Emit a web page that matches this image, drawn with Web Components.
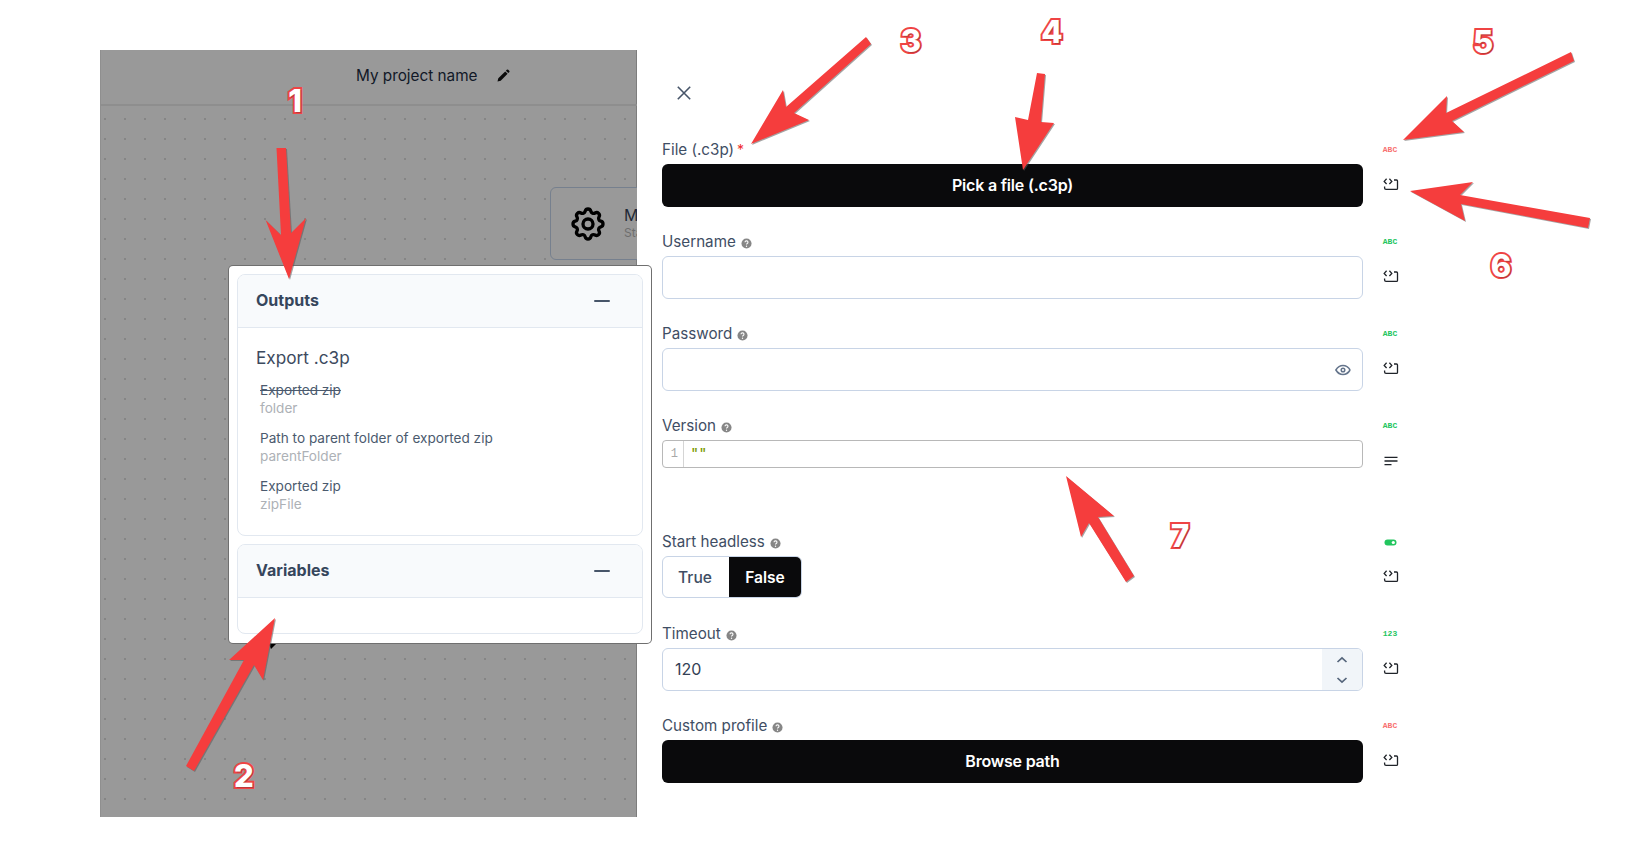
<!doctype html>
<html>
<head>
<meta charset="utf-8">
<title>Export .c3p</title>
<style>
    html, body { margin: 0; background: #fff; }
    body { font-family: Inter, "Liberation Sans", sans-serif; }
</style>
</head>
<body>

<editor-shot>
    <flow-canvas slot="canvas" project="My project name">
        <flow-panel>
            <panel-section heading="Outputs">
                <output-list></output-list>
            </panel-section>
            <panel-section heading="Variables" empty></panel-section>
        </flow-panel>
    </flow-canvas>

    <param-drawer slot="drawer">
        <param-field label="File (.c3p)" required kind="abc" tone="red">
            <dark-button>Pick a file (.c3p)</dark-button>
        </param-field>
        <param-field label="Username" help kind="abc">
            <text-box></text-box>
        </param-field>
        <param-field label="Password" help kind="abc">
            <text-box eye></text-box>
        </param-field>
        <param-field label="Version" help kind="abc" action="lines">
            <code-box></code-box>
        </param-field>
        <param-field label="Start headless" help kind="toggle">
            <bool-switch></bool-switch>
        </param-field>
        <param-field label="Timeout" help kind="123">
            <text-box stepper value="120"></text-box>
        </param-field>
        <param-field label="Custom profile" help kind="abc" tone="red">
            <dark-button>Browse path</dark-button>
        </param-field>
    </param-drawer>

    <shot-callouts slot="callouts"></shot-callouts>
</editor-shot>

<script>
// page frame: canvas on the left, form drawer on the right, callouts on top
customElements.define('editor-shot', class extends HTMLElement {
    constructor() {
        super();
        this.attachShadow({mode: 'open'}).innerHTML = `
        <style>
            :host { display: flex; position: relative; width: 1634px; height: 867px; overflow: hidden; background: #fff; }
            .left { padding: 50px 0 0 100px; }
            .right { padding-left: 25px; }
        </style>
        <div class="left"><slot name="canvas"></slot></div>
        <div class="right"><slot name="drawer"></slot></div>
        <slot name="callouts"></slot>`;
    }
});

customElements.define('flow-canvas', class extends HTMLElement {
    constructor() {
        super();
        this.attachShadow({mode: 'open'}).innerHTML = `
        <style>
            :host { display: block; position: relative; width: 537px; height: 767px; }
            .surface { height: 100%; display: flex; flex-direction: column; overflow: hidden; background: #999; box-shadow: inset -1px 0 0 #7d7d7d, inset 1px 0 0 #8f8f8f; }
            header { height: 56px; box-sizing: border-box; flex: none; display: flex; align-items: center; border-bottom: 2px solid #8e8e8e; padding: 0 0 3px 256px; gap: 18px; color: #111827; font-size: 15.3px; }
            header svg { width: 16px; height: 16px; }
            .grid { flex: 1; position: relative;
                background-image: radial-gradient(circle, #858585 1.2px, transparent 1.4px);
                background-size: 20px 20px; background-position: -5px 3px; }
            .node { position: absolute; left: 450px; top: 81px; width: 120px; height: 73px; box-sizing: border-box;
                border: 1px solid #76808e; border-radius: 6px; background: #999; display: flex; align-items: center; gap: 16px; padding-left: 17px; }
            .node svg { width: 40px; height: 40px; flex: none; }
            .node b { display: block; font-weight: 400; font-size: 16px; line-height: 18px; color: #1f2937; }
            .node small { display: block; font-size: 12px; line-height: 18px; color: #6e6e6e; }
            .stub { position: absolute; left: 168px; top: 536px; width: 10px; height: 7px; background: #000; clip-path: polygon(0 0, 100% 0, 30% 100%); }
            ::slotted(flow-panel) { position: absolute; left: 129px; top: 216px; }
        </style>
        <div class="surface">
            <header>
                <span></span>
                <svg viewBox="0 0 16 16"><path d="M2.5 13.5l.8-3.2 6.9-6.9 2.400 2.400-6.900 6.900zM10.900 2.700l.9-.9a1 1 0 0 1 1.400 0l1 1a1 1 0 0 1 0 1.400l-.9.9z" fill="#0b0b0b"/></svg>
            </header>
            <div class="grid">
                <div class="node">
                    <svg viewBox="0 0 24 24" fill="none" stroke="#000" stroke-width="2" stroke-linejoin="round"><path d="M10.325 4.317c.426 -1.756 2.924 -1.756 3.35 0a1.724 1.724 0 0 0 2.573 1.066c1.543 -.94 3.31 .826 2.37 2.37a1.724 1.724 0 0 0 1.065 2.572c1.756 .426 1.756 2.924 0 3.35a1.724 1.724 0 0 0 -1.066 2.573c.94 1.543 -.826 3.31 -2.37 2.37a1.724 1.724 0 0 0 -2.572 1.065c-.426 1.756 -2.924 1.756 -3.35 0a1.724 1.724 0 0 0 -2.573 -1.066c-1.543 .94 -3.31 -.826 -2.37 -2.37a1.724 1.724 0 0 0 -1.065 -2.572c-1.756 -.426 -1.756 -2.924 0 -3.35a1.724 1.724 0 0 0 1.066 -2.573c-.94 -1.543 .826 -3.31 2.37 -2.37c1 .608 2.296 .07 2.572 -1.065z"/><circle cx="12" cy="12" r="3"/></svg>
                    <div><b>Main</b><small>Start</small></div>
                </div>
                <div class="stub"></div>
            </div>
        </div>
        <slot></slot>`;
        this.shadowRoot.querySelector('header span').textContent = this.getAttribute('project');
    }
});

customElements.define('flow-panel', class extends HTMLElement {
    constructor() {
        super();
        this.attachShadow({mode: 'open'}).innerHTML = `
        <style>
            :host { display: flex; flex-direction: column; gap: 8px; width: 422px; height: 377px; box-sizing: border-box;
                padding: 8px; background: #fff; border-radius: 4px; box-shadow: 0 0 0 1px #6f6f6f; }
        </style>
        <slot></slot>`;
    }
});

customElements.define('panel-section', class extends HTMLElement {
    constructor() {
        super();
        this.attachShadow({mode: 'open'}).innerHTML = `
        <style>
            :host { display: block; border: 1px solid #e2e8f0; border-radius: 8px; overflow: hidden; color: #36465c; }
            .head { height: 52px; box-sizing: border-box; display: flex; align-items: center; justify-content: space-between; padding: 0 32px 2px 18px; background: #f8fafc; font-weight: 700; font-size: 16px; }
            .head i { display: block; width: 16px; height: 2px; background: #475569; border-radius: 1px; margin-top: 2px; }
            .body { border-top: 1px solid #e2e8f0; }
            :host([empty]) .body { height: 35px; }
        </style>
        <div class="head"><span></span><i></i></div>
        <div class="body"><slot></slot></div>`;
        this.shadowRoot.querySelector('span').textContent = this.getAttribute('heading');
    }
});

customElements.define('output-list', class extends HTMLElement {
    constructor() {
        super();
        this.attachShadow({mode: 'open'}).innerHTML = `
        <style>
            :host { display: block; padding: 16px 18px 22px; }
            h4 { margin: 0 0 9px; font-size: 17.2px; line-height: 28px; font-weight: 400; color: #3c4a5e; }
            .item { margin: 0 0 12px 4px; font-size: 13.6px; line-height: 18px; color: #4b5a6e; }
            .item:last-child { margin-bottom: 0; }
            .item s { text-decoration: line-through; }
            small { display: block; font-size: 13.6px; line-height: 18px; color: #adb1b6; }
        </style>
        <h4>Export .c3p</h4>
        <div class="item"><s>Exported zip</s><small>folder</small></div>
        <div class="item">Path to parent folder of exported zip<small>parentFolder</small></div>
        <div class="item">Exported zip<small>zipFile</small></div>`;
    }
});

customElements.define('param-drawer', class extends HTMLElement {
    constructor() {
        super();
        this.attachShadow({mode: 'open'}).innerHTML = `
        <style>
            :host { display: flex; flex-direction: column; gap: 23px; width: 760px; padding-top: 138px; position: relative; }
            .close { position: absolute; left: 12px; top: 83px; width: 20px; height: 20px; }
        </style>
        <svg class="close" viewBox="0 0 20 20" fill="none" stroke="#475569" stroke-width="1.6"><path d="M3.8 3.8l12.4 12.4M16.2 3.8L3.8 16.2"/></svg>
        <slot></slot>`;
    }
});

const HELP_ICON = `<svg class="help" viewBox="0 0 12 12"><circle cx="6" cy="6" r="5.5" fill="#868686"/><path d="M4.4 4.7a1.6 1.6 0 1 1 2.4 1.400c-.5.3-.8.5-.8 1" fill="none" stroke="#fff" stroke-width="1.2"/><circle cx="6" cy="9" r=".75" fill="#fff"/></svg>`;

const ACTION_ICONS = {
    source: `<svg viewBox="0 0 16 14" fill="none" stroke="#1f2329" stroke-width="1.3"><path d="M3.6.8L1.200 3.400l2.400 2.600M6.400.8l2.400 2.600-2.400 2.600M11 2h2.500a1 1 0 0 1 1 1v7.400a1 1 0 0 1-1 1H3a1.400 1.400 0 0 1-1.400-1.400V8.400"/></svg>`,
    lines: `<svg viewBox="0 0 16 14" fill="none" stroke="#1f2329" stroke-width="1.3"><path d="M1.500 3.400h13M1.500 7h13M1.500 10.600h7"/></svg>`
};

customElements.define('param-field', class extends HTMLElement {
    constructor() {
        super();
        const kind = this.getAttribute('kind');
        const tone = this.getAttribute('tone') === 'red' ? '#f87171' : '#22c55e';
        let badge = `<span class="mono">${kind === '123' ? '123' : 'ABC'}</span>`;
        if (kind === 'toggle') {
            badge = `<svg class="pill" viewBox="0 0 13 7"><rect x="0.5" y="0.5" width="12" height="6" rx="3" fill="${tone}"/><circle cx="9.3" cy="3.5" r="1.6" fill="#fff"/></svg>`;
        }
        this.attachShadow({mode: 'open'}).innerHTML = `
        <style>
            :host { display: grid; grid-template-columns: 701px 58px; grid-template-rows: 22px auto; row-gap: 4px; }
            .label { font-size: 15.2px; line-height: 20px; padding-top: 2px; box-sizing: border-box; color: #3f4e64; display: flex; align-items: center; gap: 5px; }
            .req { color: #ef2b2b; font-size: 14px; margin-left: -2px; }
            .help { width: 11px; height: 11px; margin-top: 2px; }
            .badge { display: flex; align-items: center; justify-content: center; height: 22px; padding: 2px 4px 0 0; box-sizing: border-box; color: ${tone}; }
            .mono { font: 700 8px/20px "Liberation Mono", monospace; }
            .pill { width: 13px; height: 7px; }
            .action { display: flex; justify-content: center; align-items: center; height: 14px; margin-top: 14px; padding-right: 2px; }
            .action svg { width: 16px; height: 14px; }
        </style>
        <div class="label"><span></span>${this.hasAttribute('required') ? '<span class="req">*</span>' : ''}${this.hasAttribute('help') ? HELP_ICON : ''}</div>
        <div class="badge">${badge}</div>
        <div><slot></slot></div>
        <div class="action">${ACTION_ICONS[this.getAttribute('action') || 'source']}</div>`;
        this.shadowRoot.querySelector('.label span').textContent = this.getAttribute('label');
    }
});

customElements.define('dark-button', class extends HTMLElement {
    constructor() {
        super();
        this.attachShadow({mode: 'open'}).innerHTML = `
        <style>
            :host { display: flex; align-items: center; justify-content: center; height: 43px; box-sizing: border-box; padding-bottom: 2px; background: #0a0a0c; color: #fff; border-radius: 6px; font-size: 16px; font-weight: 600; letter-spacing: -.2px; }
        </style>
        <slot></slot>`;
    }
});

customElements.define('text-box', class extends HTMLElement {
    constructor() {
        super();
        const eye = this.hasAttribute('eye') ? `<svg class="eye" viewBox="0 0 24 24" fill="none" stroke="#64748b" stroke-width="2"><circle cx="12" cy="12" r="2.4"/><path d="M21.500 12c-2.400 4-5.600 6-9.500 6s-7.100-2-9.500-6c2.400-4 5.600-6 9.500-6s7.100 2 9.500 6"/></svg>` : '';
        const stepper = this.hasAttribute('stepper') ? `<div class="stepper"><svg viewBox="0 0 12 8" fill="none" stroke="#55657b" stroke-width="1.7"><path d="M1.500 6L6 1.800 10.500 6"/></svg><svg viewBox="0 0 12 8" fill="none" stroke="#55657b" stroke-width="1.7"><path d="M1.500 2L6 6.200 10.500 2"/></svg></div>` : '';
        this.attachShadow({mode: 'open'}).innerHTML = `
        <style>
            :host { display: flex; height: 43px; box-sizing: border-box; border: 1px solid #c8d4e6; border-radius: 6px; overflow: hidden; align-items: center; color: #334155; font-size: 16px; }
            .value { flex: 1; padding: 0 0 2px 12px; }
            .eye { width: 18px; height: 18px; margin-right: 10px; }
            .stepper { width: 40px; align-self: stretch; background: #f1f5f9; display: flex; flex-direction: column; align-items: center; justify-content: center; gap: 12px; }
            .stepper svg { width: 12px; height: 8px; }
        </style>
        <div class="value"></div>${eye}${stepper}`;
        this.shadowRoot.querySelector('.value').textContent = this.getAttribute('value') || '';
    }
});

customElements.define('code-box', class extends HTMLElement {
    constructor() {
        super();
        this.attachShadow({mode: 'open'}).innerHTML = `
        <style>
            :host { display: block; height: 67px; }
            .editor { height: 28px; box-sizing: border-box; border: 1px solid #b8b8b8; border-radius: 4px; display: flex; font: 12px/26px "Liberation Mono", "DejaVu Sans Mono", monospace; }
            .gutter { width: 21px; box-sizing: border-box; border-right: 1px solid #d5d5d5; text-align: right; padding-right: 5px; color: #a8a8a8; }
            .line { padding-left: 7px; color: #7a9a00; font-weight: 700; font-size: 12px; line-height: 26px; letter-spacing: 1px; }
        </style>
        <div class="editor"><div class="gutter">1</div><div class="line">""</div></div>`;
    }
});

customElements.define('bool-switch', class extends HTMLElement {
    constructor() {
        super();
        this.attachShadow({mode: 'open'}).innerHTML = `
        <style>
            :host { display: block; height: 43px; }
            .group { display: flex; width: 140px; height: 42px; box-sizing: border-box; border: 1px solid #c8d4e6; border-radius: 6px; overflow: hidden; font-size: 15.6px; font-weight: 500; color: #3f4e64; }
            .group div { display: flex; align-items: center; justify-content: center; }
            .off { width: 64px; padding-right: 2px; }
            .on { flex: 1; background: #0a0a0c; color: #fff; font-weight: 600; }
        </style>
        <div class="group"><div class="off">True</div><div class="on">False</div></div>`;
    }
});

// red arrows and numbers pasted over the screenshot
customElements.define('shot-callouts', class extends HTMLElement {
    constructor() {
        super();
        const arrows = [
            '276.500,148 286,148 291,233 306,218 289,279 265.600,220 281,235',
            '275,618 263,680 254,665 194,771 186,766 244,660 229,660',
            '751,144 783,90 786,107 866,37 871,44 794,113 809,120',
            '1023,170 1015,117 1028,120 1037,73 1045,74 1041,122 1054,123',
            '1403,140 1447,96 1446,113 1571,52 1574,61 1452,121 1464,132',
            '1410,191 1473,182 1460,195 1590,218 1588,228 1461,204 1465,221',
            '1066,476 1114,516 1098,517 1134,576 1126,582 1089,523 1081,537'
        ];
        const numbers = [[1, 295, 101], [2, 244, 776], [3, 911, 41], [4, 1052, 32], [5, 1483, 42], [6, 1501, 266], [7, 1180, 536]];
        this.attachShadow({mode: 'open'}).innerHTML = `
        <style>
            :host { position: absolute; inset: 0; pointer-events: none; }
            svg { position: absolute; left: 0; top: 0; width: 1634px; height: 867px; filter: drop-shadow(1px 1px 0 rgba(90,90,90,.55)); }
            polygon { fill: #f53d3d; }
            span { position: absolute; width: 30px; height: 36px; margin: -18px 0 0 -15px; text-align: center;
                font: 800 31px/36px Inter, "Liberation Sans", sans-serif; color: #fff;
                -webkit-text-stroke: 4px #ef4444; paint-order: stroke fill; text-shadow: 1px 1px 0 rgba(110,40,40,.4); }
        </style>
        <svg viewBox="0 0 1634 867">${arrows.map(p => `<polygon points="${p}"/>`).join('')}</svg>
        ${numbers.map(n => `<span style="left:${n[1]}px;top:${n[2]}px">${n[0]}</span>`).join('')}`;
    }
});
</script>
</body>
</html>
